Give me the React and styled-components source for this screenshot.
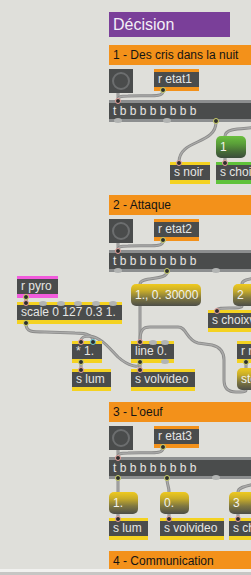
import React from "react";
import styled, { createGlobalStyle, css } from "styled-components";

const ORANGE = "#f3911a";
const YELLOW = "#f4d221";
const PINK = "#f15cdc";
const GREEN = "#5fc23b";
const STRIPE = "#8c8e8f";
const IN_RING = "#e8a29c";
const OUT_RING = "#cfd36a";
const TEAL = "#6cc6d4";

const GlobalStyle = createGlobalStyle`
  html, body {
    margin: 0;
    padding: 0;
    background: #dfdfda;
  }
  body {
    font-family: "Liberation Sans", Arial, sans-serif;
  }
`;

const Window = styled.div`
  width: 251px;
  height: 575px;
  display: flex;
  flex-direction: column;
  overflow: hidden;
  background: #dfdfda;
`;

// the patcher canvas: objects sit where the patch puts them
const Canvas = styled.div`
  position: relative;
  flex: 1;
  overflow: hidden;
`;

const ScrollEdge = styled.div`
  flex: none;
  height: 6px;
  box-sizing: border-box;
  border-top: 3px solid #f1f1ef;
  background: #c6c6c4;
`;

const Cables = styled.svg`
  position: absolute;
  left: 0;
  top: 0;
  width: 251px;
  height: 569px;
`;

const Node = styled.div`
  position: absolute;
  left: ${(p) => p.$x}px;
  top: ${(p) => p.$y}px;
  width: ${(p) => p.$w}px;
  height: ${(p) => p.$h ?? 22}px;
`;

const Title = styled(Node)`
  box-sizing: border-box;
  background: #7a3f99;
  color: #f3eef6;
  font-size: 16px;
  line-height: 25px;
  padding-left: 4px;
`;

const Header = styled(Node)`
  box-sizing: border-box;
  background: ${ORANGE};
  color: #141414;
  font-size: 12px;
  line-height: 20px;
  padding-left: 4px;
  white-space: nowrap;
`;

const ObjectBody = styled.div`
  box-sizing: border-box;
  height: 100%;
  background: #4a4c4c;
  border-top: 3px solid ${(p) => p.$accent};
  border-bottom: ${(p) => p.$foot}px solid ${(p) => p.$accent};
  color: #e6e6e4;
  font-size: 12px;
  line-height: ${(p) => 19 - p.$foot}px;
  padding: 0 4px;
  white-space: nowrap;
  overflow: hidden;
`;

const MessageBody = styled.div`
  box-sizing: border-box;
  height: 100%;
  border-radius: 5px;
  background: ${(p) =>
    p.$green
      ? "linear-gradient(180deg, #6bc03e 0%, #5a9f39 35%, #476e37 70%, #3b4c3a 100%)"
      : "linear-gradient(180deg, #efca1f 0%, #c9ad29 30%, #7f7740 64%, #4d4e48 100%)"};
  color: #f2f2ee;
  font-size: 12px;
  line-height: 22px;
  padding: 0 4px;
  white-space: nowrap;
  overflow: hidden;
`;

const BangBody = styled.div`
  box-sizing: border-box;
  height: 100%;
  background: #4a4c4c;
  display: flex;
  align-items: center;
  justify-content: center;

  &::after {
    content: "";
    width: 14px;
    height: 14px;
    border: 2px solid #6c6e6f;
    border-radius: 50%;
  }
`;

const Port = styled.span`
  position: absolute;
  left: ${(p) => p.$at - 4}px;
  width: 8px;
  height: 5px;
  border-radius: 50%;
  background: #b2b4b3;
  ${(p) => (p.$side === "in" ? css`top: -1px;` : css`bottom: -1px;`)}
`;

const Jack = styled.span`
  position: absolute;
  left: ${(p) => p.$at - 3}px;
  width: 6px;
  height: 6px;
  box-sizing: border-box;
  border-radius: 50%;
  background: #2d2e2e;
  border: 1.5px solid ${(p) => p.$ring};
  ${(p) => (p.$side === "in" ? css`top: -2px;` : css`bottom: -2px;`)}
`;

const spread = (n, w) =>
  Array.from({ length: n }, (_, i) => (n === 1 ? 9 : 9 + (i * (w - 18)) / (n - 1)));

function Ports({ list, side, w }) {
  const at = spread(list.length, w);
  return list.map((ring, i) =>
    ring ? (
      <Jack key={side + i} $side={side} $at={at[i]} $ring={ring} />
    ) : (
      <Port key={side + i} $side={side} $at={at[i]} />
    )
  );
}

function MaxObject({ x, y, w, accent, foot = 4, text, ins = [], outs = [] }) {
  return (
    <Node $x={x} $y={y} $w={w}>
      <ObjectBody $accent={accent} $foot={foot}>
        {text}
      </ObjectBody>
      <Ports list={ins} side="in" w={w} />
      <Ports list={outs} side="out" w={w} />
    </Node>
  );
}

function Message({ x, y, w, text, green }) {
  return (
    <Node $x={x} $y={y} $w={w}>
      <MessageBody $green={green}>{text}</MessageBody>
    </Node>
  );
}

function Bang({ x, y }) {
  return (
    <Node $x={x} $y={y} $w={24} $h={24}>
      <BangBody />
    </Node>
  );
}

const trigger = (y, outs) => (
  <MaxObject
    x={109}
    y={y}
    w={410}
    accent={STRIPE}
    foot={3}
    text="t b b b b b b b b"
    ins={[IN_RING]}
    outs={outs}
  />
);

const CABLES = [
  // 1 - Des cris dans la nuit
  "M118 93 L118 100",
  "M163 91 C163 98 150 95 128 96 C120 96 118 97 118 100",
  "M216 122 C216 145 179 139 179 162",
  "M265 122 C265 132 225 124 225 136",
  "M225 158 L225 162",
  // 2 - Attaque
  "M118 243 L118 250",
  "M163 241 C163 248 150 245 128 246 C120 246 118 247 118 250",
  "M167 272 C167 281 140 276 140 284",
  "M268 272 C268 280 242 276 242 284",
  "M242 306 C242 310 217 306 217 310",
  "M140 306 L140 341",
  "M140 341 C140 330 143 327 150 327 L178 327 C187 327 186 340 198 343 L212 345 C220 347 224 352 224 360 L224 380 C224 388 228 392 236 392 C242 392 246 392 246 390",
  "M246 363 L246 368",
  "M26 298 L26 302",
  "M26 324 C26 332 32 332 45 332 L75 333 C88 333 93 336 93 341",
  "M140 363 C140 369 128 366 118 357 C108 347 102 338 90 336 C84 336 81 337 81 341",
  "M140 363 L140 369",
  "M81 363 L81 369",
  // 3 - L'oeuf
  "M118 450 L118 457",
  "M163 448 C163 455 150 452 128 453 C120 453 118 454 118 457",
  "M118 479 L118 492",
  "M167 479 C167 485 169 486 169 492",
  "M262 479 C262 486 238 484 238 492",
  "M118 514 L118 518",
  "M169 514 L169 518",
  "M238 514 L238 518",
];

export default function App() {
  return (
    <>
      <GlobalStyle />
      <Window>
        <Canvas>
          <Cables viewBox="0 0 251 569">
            {CABLES.map((d, i) => (
              <g key={i} fill="none" strokeLinecap="round">
                <path d={d} stroke="#8b8b8a" strokeWidth="3" />
                <path d={d} stroke="#aaaaa9" strokeWidth="1.3" />
              </g>
            ))}
          </Cables>

          <Title $x={109} $y={12} $w={121} $h={25}>
            Décision
          </Title>

          {/* 1 - Des cris dans la nuit */}
          <Header $x={109} $y={45} $w={200} $h={20}>
            1 - Des cris dans la nuit
          </Header>
          <Bang x={109} y={69} />
          <MaxObject x={154} y={69} w={45} accent={ORANGE} text="r etat1" outs={[OUT_RING]} />
          {trigger(100, [null, null, OUT_RING, OUT_RING, null, null, null, null, null])}
          <Message x={216} y={136} w={30} text="1" green />
          <MaxObject x={170} y={162} w={40} accent={YELLOW} text="s noir" ins={[IN_RING]} />
          <MaxObject x={216} y={162} w={70} accent={GREEN} text="s choix" ins={[IN_RING]} />

          {/* 2 - Attaque */}
          <Header $x={109} $y={195} $w={200} $h={20}>
            2 - Attaque
          </Header>
          <Bang x={109} y={219} />
          <MaxObject x={154} y={219} w={45} accent={ORANGE} text="r etat2" outs={[OUT_RING]} />
          {trigger(250, [null, OUT_RING, null, OUT_RING, null, null, null, null, null])}
          <Message x={131} y={284} w={70} text="1., 0. 30000" />
          <Message x={233} y={284} w={30} text="2" />
          <MaxObject x={208} y={310} w={80} accent={YELLOW} text="s choixvideo" ins={[IN_RING]} />

          <MaxObject x={17} y={276} w={41} accent={PINK} text="r pyro" outs={[OUT_RING]} />
          <MaxObject
            x={17}
            y={302}
            w={105}
            accent={YELLOW}
            text="scale 0 127 0.3 1."
            ins={[IN_RING, null, null, null, null, null]}
            outs={[OUT_RING]}
          />
          <MaxObject x={72} y={341} w={30} accent={YELLOW} text="* 1." ins={[IN_RING, TEAL]} outs={[OUT_RING]} />
          <MaxObject x={131} y={341} w={43} accent={YELLOW} text="line 0." ins={[IN_RING, null, null]} outs={[OUT_RING, null]} />
          <MaxObject x={72} y={369} w={39} accent={YELLOW} text="s lum" ins={[IN_RING]} />
          <MaxObject x={131} y={369} w={64} accent={YELLOW} text="s volvideo" ins={[IN_RING]} />
          <MaxObject x={237} y={341} w={50} accent={YELLOW} text="r reset" outs={[OUT_RING]} />
          <Message x={237} y={368} w={34} text="stop" />

          {/* 3 - L'oeuf */}
          <Header $x={109} $y={402} $w={200} $h={20}>
            3 - L'oeuf
          </Header>
          <Bang x={109} y={426} />
          <MaxObject x={154} y={426} w={45} accent={ORANGE} text="r etat3" outs={[OUT_RING]} />
          {trigger(457, [OUT_RING, OUT_RING, null, OUT_RING, null, null, null, null, null])}
          <Message x={109} y={492} w={29} text="1." />
          <Message x={160} y={492} w={29} text="0." />
          <Message x={229} y={492} w={30} text="3" />
          <MaxObject x={109} y={518} w={39} accent={YELLOW} text="s lum" ins={[IN_RING]} />
          <MaxObject x={160} y={518} w={64} accent={YELLOW} text="s volvideo" ins={[IN_RING]} />
          <MaxObject x={229} y={518} w={70} accent={YELLOW} text="s choix" ins={[IN_RING]} />

          {/* 4 - Communication */}
          <Header $x={109} $y={551} $w={200} $h={20}>
            4 - Communication
          </Header>
        </Canvas>
        <ScrollEdge />
      </Window>
    </>
  );
}
